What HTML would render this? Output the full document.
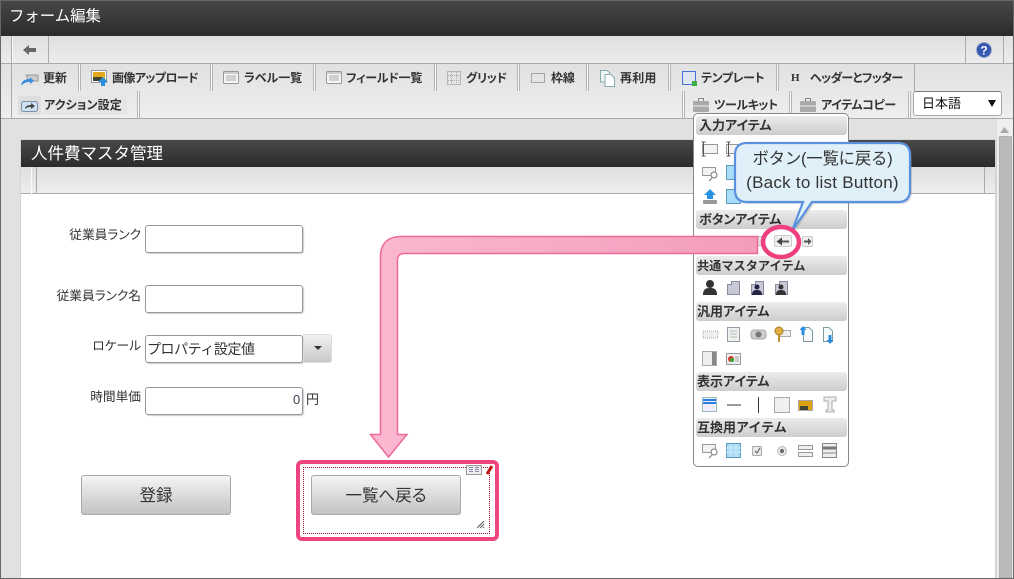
<!DOCTYPE html>
<html lang="ja"><head><meta charset="utf-8"><title>フォーム編集</title>
<style>
*{box-sizing:border-box}
html,body{margin:0;padding:0;background:#fff}
#p{position:relative;width:1014px;height:579px;overflow:hidden;background:#e1e1e1;font-family:"Liberation Sans","Noto Sans CJK JP",sans-serif;font-feature-settings:"palt";color:#222}
#p div,#p span.a,#p svg{position:absolute}
.t{white-space:nowrap;font-size:12px;line-height:16px;font-weight:700;color:#333;letter-spacing:-.1px}
.sep{width:3px;height:27px;background:linear-gradient(90deg,#b4b4b4 0 1px,#fafafa 1px 2px,#b4b4b4 2px)}
.h{left:696px;width:151px;height:19px;border-radius:3px;background:linear-gradient(#ececec,#cdcdcd);font-size:13px;font-weight:700;line-height:20px;padding-left:3px;color:#333;white-space:nowrap}
.inp{left:145px;width:158px;height:28px;background:#fff;border:1px solid #999;border-radius:3px;box-shadow:1px 1px 1px #ccc}
.lb{font-size:12.7px;line-height:18px;white-space:nowrap;text-align:right;color:#333;right:873px}
.btn{top:475px;width:150px;height:40px;border:1px solid #aaa;border-radius:3px;background:linear-gradient(#f4f4f4,#c3c3c3);text-align:center;font-size:16.5px;line-height:41px;color:#333}
</style></head><body><div id="p">
<!-- header -->
<div style="left:0;top:0;width:1014px;height:36px;background:linear-gradient(#474747,#2b2b2b);border-top:1px solid #777"></div>
<div style="left:9px;top:6px;font-size:15.4px;line-height:22px;color:#fff;white-space:nowrap;font-feature-settings:normal">フォーム編集</div>
<!-- toolbar 1 -->
<div style="left:0;top:36px;width:1014px;height:28px;background:linear-gradient(#dfdfdf,#ececec);border-bottom:1px solid #aaa"></div>
<div style="left:11px;top:36px;width:1px;height:27px;background:#aaa"></div><div style="left:12px;top:36px;width:37px;height:27px;border-right:1px solid #aaa;box-shadow:inset 1px 0 #fafafa"></div>
<svg style="left:23px;top:44px" width="14" height="12"><path d="M0 6 6 1V4H13V8H6V11Z" fill="#666"/></svg>
<div style="left:965px;top:36px;width:1px;height:27px;background:#aaa"></div>
<div style="left:1003px;top:36px;width:1px;height:82px;background:#aaa"></div>
<svg style="left:976px;top:42px" width="16" height="16"><circle cx="8" cy="8" r="7.500" fill="#3557b0" stroke="#9aa8c8"/><text x="8" y="12.500" font-size="12" font-weight="700" fill="#fff" text-anchor="middle" font-family="Liberation Sans">?</text></svg>
<!-- toolbar 2 -->
<div style="left:0;top:64px;width:1014px;height:55px;background:linear-gradient(#e1e1e1,#eeeeee);border-bottom:1px solid #aaa"></div>
<div style="left:11px;top:64px;width:1px;height:54px;background:#aaa"></div>
<div class="sep" style="left:78px;top:64px"></div><div class="sep" style="left:210px;top:64px"></div><div class="sep" style="left:313px;top:64px"></div><div class="sep" style="left:434px;top:64px"></div><div class="sep" style="left:517px;top:64px"></div><div class="sep" style="left:586px;top:64px"></div><div class="sep" style="left:668px;top:64px"></div><div class="sep" style="left:776px;top:64px"></div>
<div style="left:914px;top:64px;width:1px;height:27px;background:#aaa"></div>
<div class="sep" style="left:137px;top:91px"></div><div class="sep" style="left:682px;top:91px"></div><div class="sep" style="left:789px;top:91px"></div><div class="sep" style="left:908px;top:91px"></div>
<!-- toolbar icons -->
<svg style="left:21px;top:74px" width="18" height="12"><path d="M5 1H17V7H8Z" fill="#ccc" stroke="#999"/><path d="M0 11C1 6 5 5 9 5V3L13 7 9 10V8C5 8 3 9 1 11Z" fill="#3c8fe0"/></svg>
<svg style="left:91px;top:70px" width="17" height="17"><rect x=".5" y=".5" width="15" height="12" fill="#fff" stroke="#999"/><rect x="2" y="2" width="12" height="9" fill="#e2a820"/><rect x="2" y="7" width="9" height="4" fill="#443"/><path d="M12 7 17 12H14V16H10V12H7Z" fill="#2a90e0"/></svg>
<svg style="left:223px;top:71px" width="16" height="13"><rect x=".5" y=".5" width="15" height="12" rx="1" fill="#f5f5f5" stroke="#999"/><rect x="1" y="1" width="14" height="2" fill="#ccc"/><path d="M3 5H13M3 7H13M3 9H13" stroke="#aaa"/></svg>
<svg style="left:326px;top:71px" width="16" height="13"><rect x=".5" y=".5" width="15" height="12" rx="1" fill="#f5f5f5" stroke="#999"/><rect x="1" y="1" width="14" height="2" fill="#ccc"/><path d="M3 5H13M3 7H13M3 9H13" stroke="#aaa"/></svg>
<svg style="left:447px;top:71px" width="14" height="14"><rect x=".5" y=".5" width="13" height="13" fill="none" stroke="#888" stroke-dasharray="1 1"/><path d="M4.500 1V13M9.500 1V13M1 4.500H13M1 9.500H13" stroke="#aaa" stroke-dasharray="1 1"/></svg>
<svg style="left:531px;top:73px" width="14" height="10"><rect x=".5" y=".5" width="13" height="9" fill="none" stroke="#666" stroke-dasharray="1 1"/></svg>
<svg style="left:600px;top:70px" width="15" height="17"><path d="M.5.500H7L10 3V12H.5Z" fill="#f0f5f5" stroke="#8aa"/><path d="M5 4.500H11L14.500 8V16.500H5Z" fill="#fff" stroke="#8aa"/></svg>
<svg style="left:681px;top:70px" width="17" height="17"><rect x="1.500" y="1.500" width="13" height="13" fill="#dfe6f2" stroke="#4a6fd8"/><rect x="11" y="11" width="5" height="5" fill="#3cb043"/></svg>
<div class="t" style="left:791px;top:70px;font-family:'Liberation Serif',serif;font-size:11px">H</div>
<svg style="left:693px;top:98px" width="16" height="14"><rect x="5.500" y=".5" width="5" height="3" fill="none" stroke="#888"/><rect y="3" width="16" height="11" rx="1" fill="#aaa"/><path d="M0 8H16" stroke="#eee"/></svg>
<svg style="left:800px;top:98px" width="16" height="14"><rect x="5.500" y=".5" width="5" height="3" fill="none" stroke="#888"/><rect y="3" width="16" height="11" rx="1" fill="#aaa"/><path d="M0 8H16" stroke="#eee"/></svg>
<div style="left:18px;top:96px;width:23px;height:19px;background:#dedede"></div>
<svg style="left:21px;top:99px" width="17" height="13"><rect x=".5" y="2.500" width="16" height="10" rx="2" fill="#cfe0f2" stroke="#7f8fa8"/><path d="M4 10C4 7 7 6 10 6V4L14 7 10 10V8C8 8 6 8 4 10Z" fill="#444"/></svg>
<div style="left:43px;top:96px;width:84px;height:19px;background:#e6e6e6"></div>
<!-- toolbar labels -->
<div class="t" style="left:43px;top:70px">更新</div>
<div class="t" style="left:112px;top:70px;letter-spacing:-.6px">画像アップロード</div>
<div class="t" style="left:244px;top:70px">ラベル一覧</div>
<div class="t" style="left:346px;top:70px;letter-spacing:-.25px">フィールド一覧</div>
<div class="t" style="left:466px;top:70px;letter-spacing:-.4px">グリッド</div>
<div class="t" style="left:551px;top:70px">枠線</div>
<div class="t" style="left:620px;top:70px;letter-spacing:.2px">再利用</div>
<div class="t" style="left:701px;top:70px;letter-spacing:-.4px">テンプレート</div>
<div class="t" style="left:810px;top:70px;letter-spacing:-.65px">ヘッダーとフッター</div>
<div class="t" style="left:44px;top:97px;letter-spacing:.1px">アクション設定</div>
<div class="t" style="left:714px;top:97px;letter-spacing:-.4px">ツールキット</div>
<div class="t" style="left:821px;top:97px;letter-spacing:-.4px">アイテムコピー</div>
<!-- language select -->
<div style="left:913px;top:91px;width:89px;height:25px;background:#fff;border:1px solid #aaa;border-top-color:#777;border-radius:3px"></div>
<div style="left:922px;top:95px;font-size:13px;line-height:18px;color:#111;font-feature-settings:normal">日本語</div>
<svg style="left:988px;top:100px" width="9" height="8"><path d="M0 0H8L4 7Z" fill="#111"/></svg>
<!-- scrollbar -->
<div style="left:997px;top:119px;width:16px;height:459px;background:#eee"></div>
<svg style="left:1000px;top:127px" width="10" height="6"><path d="M0 6H9L4.500 0Z" fill="#aaa"/></svg>
<div style="left:999px;top:136px;width:13px;height:442px;background:#bababa;border:1px solid #b0b0b0"></div>
<!-- panel -->
<div style="left:20px;top:139px;width:977px;height:439px;background:#fff;border:1px solid #d4d4d4;border-right-width:2px;border-bottom:0"></div>
<div style="left:21px;top:140px;width:974px;height:27px;background:linear-gradient(#484848,#2b2b2b)"></div>
<div style="left:31px;top:143px;font-size:16.5px;line-height:22px;color:#fff;white-space:nowrap;font-feature-settings:normal">人件費マスタ管理</div>
<div style="left:21px;top:167px;width:974px;height:27px;background:linear-gradient(#dedede,#eeeeee);border-bottom:1px solid #aaa"></div>
<div style="left:31px;top:167px;width:1px;height:27px;background:#fafafa"></div><div style="left:36px;top:167px;width:1px;height:27px;background:#aaa"></div><div style="left:984px;top:167px;width:1px;height:27px;background:#aaa"></div>
<!-- form -->
<div class="lb" style="top:226px">従業員ランク</div><div class="inp" style="top:225px"></div>
<div class="lb" style="top:287px">従業員ランク名</div><div class="inp" style="top:285px"></div>
<div class="lb" style="top:337px">ロケール</div><div class="inp" style="top:335px"></div>
<div style="left:147px;top:339px;font-size:14px;line-height:20px;color:#333;white-space:nowrap;font-feature-settings:normal;letter-spacing:-.45px">プロパティ設定値</div>
<div style="left:303px;top:334px;width:29px;height:29px;border-radius:0 3px 3px 0;background:linear-gradient(#f2f2f2,#c8c8c8);border:1px solid #ddd"></div>
<svg style="left:314px;top:346px" width="8" height="4"><path d="M0 0H8L4 4Z" fill="#333"/></svg>
<div class="lb" style="top:388px">時間単価</div><div class="inp" style="top:387px"></div>
<div style="left:293px;top:392px;font-size:13px;line-height:16px;color:#345">0</div>
<div style="left:306px;top:391px;font-size:13px;line-height:18px;color:#333">円</div>
<div class="btn" style="left:81px">登録</div>
<!-- selected box -->
<div style="left:296px;top:460px;width:203px;height:81px;border:4px solid #ee4480;border-radius:6px;background:#fff"></div>
<div style="left:303px;top:467px;width:187px;height:67px;border:1px dotted #a01020"></div>
<div class="btn" style="left:311px">一覧へ戻る</div>
<svg style="left:466px;top:465px" width="16" height="10"><rect x=".5" y=".5" width="15" height="9" fill="#eee" stroke="#999"/><path d="M3 2.500H7M3 4.500H7M3 6.500H7M9 2.500H13M9 4.500H13M9 6.500H13" stroke="#88a"/></svg>
<svg style="left:486px;top:465px" width="7" height="10"><path d="M1 9 6 1" stroke="#c01818" stroke-width="3"/></svg>
<svg style="left:477px;top:521px" width="8" height="7"><path d="M0 7 7 0M3 7 7 3M6 7 7 6" stroke="#555"/></svg>
<!-- toolkit panel -->
<div style="left:693px;top:113px;width:156px;height:354px;background:#fff;border:1px solid #888;border-radius:5px"></div>
<div class="h" style="top:116px">入力アイテム</div>
<div class="h" style="top:210px;letter-spacing:-.1px">ボタンアイテム</div>
<div class="h" style="top:256px;padding-left:1px;font-size:12.2px;font-feature-settings:normal">共通マスタアイテム</div>
<div class="h" style="top:302px;padding-left:1px">汎用アイテム</div>
<div class="h" style="top:372px;padding-left:1px">表示アイテム</div>
<div class="h" style="top:418px;padding-left:1px;font-feature-settings:normal">互換用アイテム</div>
<svg style="left:693px;top:135px" width="156" height="332" fill="none">
<!-- input row -->
<g stroke="#999"><rect x="9.500" y="9.500" width="15" height="9" fill="#f4f4f4"/><rect x="33.500" y="9.500" width="15" height="9" fill="#f4f4f4"/></g>
<path d="M10.500 7V21M8.500 7H12.500M8.500 21H12.500M35.500 7V21M33.500 7H37.500M33.500 21H37.500" stroke="#555"/>
<rect x="9.500" y="32.500" width="13" height="8" fill="#f2f2f2" stroke="#999"/><circle cx="21" cy="40" r="3" fill="#fff" stroke="#777"/><path d="M19 43 16 46" stroke="#777"/>
<rect x="33.500" y="30.500" width="14" height="14" fill="#a8dcf8" stroke="#5a9ab8"/>
<path d="M17 54 23 60H20V64H14V60H11Z" fill="#2a90e0"/><rect x="10" y="65" width="14" height="4" rx="1" fill="#999"/>
<rect x="33.500" y="54.500" width="14" height="14" fill="#a8dcf8" stroke="#5a9ab8"/>
<!-- button row -->
<rect x="60.500" y="101.500" width="9" height="9" fill="#e4e4e4" stroke="#bbb"/>
<rect x="109.500" y="101.500" width="10" height="10" rx="1" fill="#eee" stroke="#ccc"/><path d="M111 106.500H115" stroke="#555" stroke-width="2"/><path d="M115 103 118.500 106.500 115 110Z" fill="#555"/>
<!-- common -->
<circle cx="17" cy="149" r="4" fill="#333"/><path d="M10 160C10 154 13 153 17 153S24 154 24 160Z" fill="#333"/>
<g fill="#c8c9d6" stroke="#8a8a9a"><path d="M34.500 159.500V149.500H38.500V146.500H46.500V159.500Z"/><path d="M58.500 159.500V149.500H62.500V146.500H70.500V159.500Z"/><path d="M82.500 159.500V149.500H86.500V146.500H94.500V159.500Z"/></g>
<circle cx="64" cy="152" r="2.500" fill="#224"/><path d="M59 160C59 156 61 155 64 155S69 156 69 160Z" fill="#224"/>
<circle cx="88" cy="152" r="2.500" fill="#333"/><path d="M83 160C83 156 85 155 88 155S93 156 93 160Z" fill="#333"/>
<!-- generic -->
<rect x="10" y="196" width="15" height="7" fill="#eee" stroke="#aaa" stroke-dasharray="1 1"/>
<rect x="34.500" y="192.500" width="12" height="14" fill="#eef2ee" stroke="#99a"/><path d="M37 196H44M37 199H44M37 202H44" stroke="#bbb"/>
<rect x="58" y="195" width="15" height="9" rx="3" fill="#ccc" stroke="#aaa"/><circle cx="65.500" cy="199.500" r="3" fill="#777"/>
<rect x="86.500" y="195.500" width="11" height="6" fill="#eee" stroke="#aaa"/><circle cx="86" cy="196" r="4" fill="#e0b040" stroke="#a87c20"/><path d="M86 199V207" stroke="#c09030" stroke-width="2"/>
<path d="M110.500 192.500H116L119.500 196V206.500H110.500Z" fill="#f6fafa" stroke="#7a9aa0"/><path d="M110 191 113.500 195H111.500V200H108.500V195H106.500Z" fill="#2a8ee0"/>
<path d="M130.500 192.500H136L139.500 196V206.500H130.500Z" fill="#f6fafa" stroke="#7a9aa0"/><path d="M137 209 133.500 205H135.500V200H138.500V205H140.500Z" fill="#2a8ee0"/>
<rect x="9.500" y="216.500" width="14" height="14" fill="#eee" stroke="#aaa"/><rect x="19" y="217" width="4" height="13" fill="#888"/>
<rect x="33.500" y="218.500" width="14" height="11" fill="#eee" stroke="#999"/><circle cx="38" cy="224" r="3" fill="#d33"/><circle cx="39" cy="225" r="2" fill="#3a3"/><path d="M42 222H46M42 224H46M42 226H46" stroke="#aaa"/>
<!-- display -->
<rect x="9.500" y="262.500" width="14" height="14" fill="#eef" stroke="#9bb"/><path d="M10 265H23M10 268H23" stroke="#2a80e0" stroke-width="2"/>
<path d="M34 270H48" stroke="#333"/><path d="M65.500 262V278" stroke="#333"/>
<rect x="81.500" y="262.500" width="15" height="15" fill="#f0f0f0" stroke="#aaa"/>
<rect x="105.500" y="265.500" width="14" height="10" fill="#dda010" stroke="#aaa"/><rect x="107" y="271" width="8" height="4" fill="#443"/>
<path d="M131 262H143V266H139V275H141V277H133V275H135V266H131Z" fill="#eee" stroke="#aaa"/>
<!-- compat -->
<rect x="9.500" y="309.500" width="13" height="8" fill="#f2f2f2" stroke="#999"/><circle cx="21" cy="317" r="3" fill="#fff" stroke="#777"/><path d="M19 320 16 323" stroke="#777"/>
<rect x="33.500" y="308.500" width="14" height="14" fill="#a8dcf8" stroke="#5a9ab8"/><path d="M33 313H48M33 317H48M38 309V322M43 309V322" stroke="#d0ecf8"/>
<rect x="59.500" y="311.500" width="9" height="9" rx="1" fill="#e8e8e8" stroke="#aaa"/><path d="M62 316 64 318 67 313" stroke="#555"/>
<circle cx="89" cy="316" r="4.500" fill="#e4e4e4" stroke="#bbb"/><circle cx="89" cy="316" r="2" fill="#666"/>
<rect x="105.500" y="310.500" width="14" height="4" fill="#eee" stroke="#999"/><rect x="105.500" y="317.500" width="14" height="4" fill="#eee" stroke="#999"/>
<rect x="129.500" y="308.500" width="14" height="14" fill="#eee" stroke="#888"/><path d="M130 313H143" stroke="#777" stroke-width="3"/><path d="M130 318H143" stroke="#888"/>
</svg>
<!-- pink arrow -->
<svg style="left:360px;top:225px" width="410" height="240" fill="none">
<defs><linearGradient id="g" x1="0" y1="0" x2="1" y2="0"><stop offset="0" stop-color="#fab8d0"/><stop offset="1" stop-color="#f49cbc"/></linearGradient></defs>
<path d="M397.500 11.500H40C28 11.500 20.500 19 20.500 31V209.500H10.500L28.500 232 47 209.500H37.500V35C37.500 31 40 28.500 44 28.500H397.500Z" fill="url(#g)" stroke="#ee6a9a" stroke-width="1.500"/>
</svg>
<!-- callout + circle -->
<svg style="left:725px;top:135px" width="200" height="130" fill="none">
<path d="M22 8H173Q185 8 185 20V55Q185 67 173 67H87L67 96 78 67H22Q10 67 10 55V20Q10 8 22 8Z" fill="#888" opacity=".3" transform="translate(2 2)"/>
<path d="M22 8H173Q185 8 185 20V55Q185 67 173 67H87L67 96 78 67H22Q10 67 10 55V20Q10 8 22 8Z" fill="#dff0f9" stroke="#5a90dc" stroke-width="2.200"/>
</svg>
<div style="left:735px;top:148px;width:175px;text-align:center;font-size:16.400px;line-height:22px;color:#333;white-space:nowrap;font-feature-settings:normal;letter-spacing:-.2px">ボタン(一覧に戻る)</div>
<div style="left:735px;top:172px;width:175px;text-align:center;font-size:17px;line-height:22px;color:#333;white-space:nowrap;letter-spacing:.25px">(Back to list Button)</div>
<svg style="left:753px;top:220px" width="56" height="44" fill="none"><ellipse cx="28" cy="22" rx="18" ry="15" stroke="#ee3f7f" stroke-width="4.500"/><rect x="21.500" y="15.500" width="17" height="11" rx="1" fill="#eee" stroke="#ccc"/><path d="M28 21.500H36" stroke="#555" stroke-width="2"/><path d="M23.500 21.500 29 17.500V25.500Z" fill="#444"/></svg>
<!-- outer border -->
<div style="left:0;top:0;width:1014px;height:579px;border:1px solid #666;pointer-events:none"></div>
</div></body></html>
